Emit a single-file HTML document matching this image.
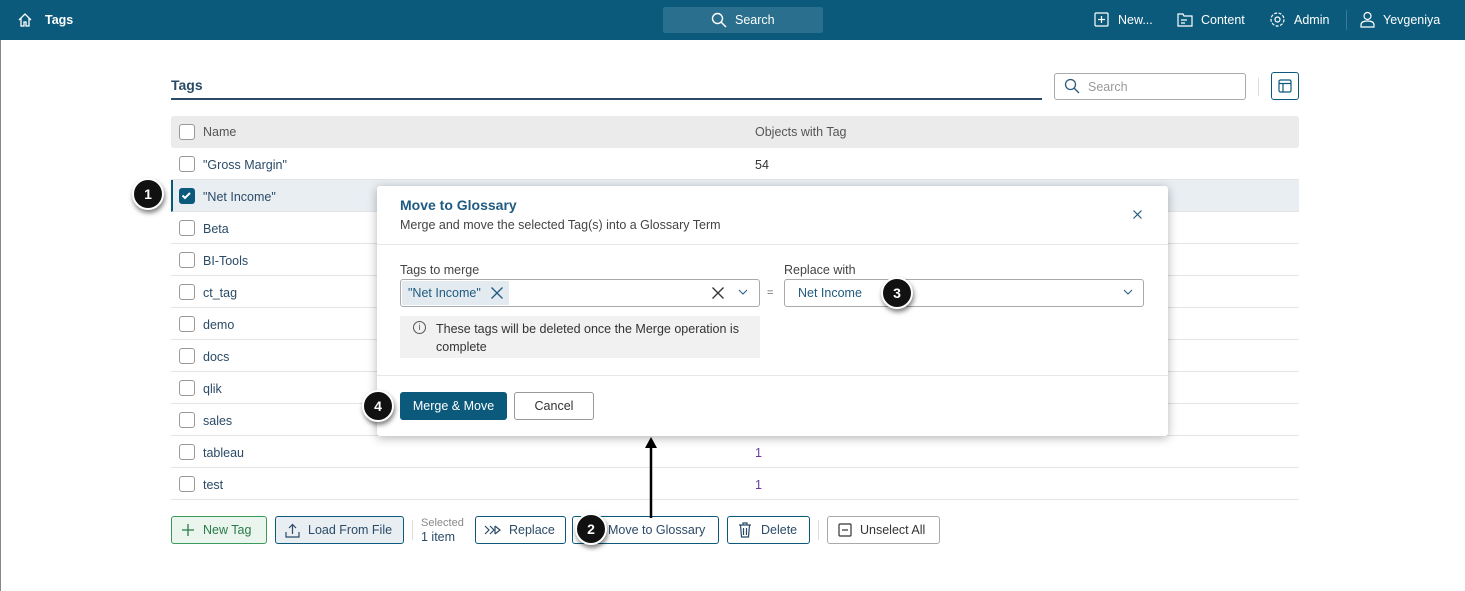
<!DOCTYPE html>
<html><head><style>
*{box-sizing:border-box;margin:0;padding:0}
body{width:1465px;height:591px;position:relative;font-family:"Liberation Sans",sans-serif;background:#fff;overflow:hidden;font-size:12.5px;color:#333}
.abs{position:absolute}
.top{left:0;top:0;width:1465px;height:40px;background:#0b5a7c;color:#fff;font-size:12.5px}
.top .t{position:absolute;top:13px}
.cb{position:absolute;width:16px;height:16px;border:1.5px solid #999;border-radius:3px;background:#fff}
.row{position:absolute;left:171px;width:1128px;height:32px;border-bottom:1px solid #e4e4e4}
.row .n{position:absolute;left:32px;top:10px;color:#2a4a66}
.row .c{position:absolute;left:584px;top:10px}
.row .cb{left:8px;top:8px}
.btn{position:absolute;top:516px;height:28px;border:1px solid #0b5a7c;border-radius:3px;font-size:12.5px;color:#2a4a66;padding-top:6px}
.badge{position:absolute;width:32px;height:32px;border-radius:50%;background:#111;border:2px solid #fff;box-shadow:1px 3px 5px rgba(0,0,0,.5);color:#fff;font-weight:bold;font-size:14px;text-align:center;line-height:28px}
</style></head><body>
<div class="abs top">
<svg class="abs" style="left:17px;top:12px" width="16" height="16" viewBox="0 0 16 16" fill="none" stroke="#fff" stroke-width="1.3"><path d="M2 8L8 2l6 6M4 6.5V14h3v-4h2v4h3V6.5"/></svg>
<span class="t" style="left:45px;font-weight:bold">Tags</span>
<div class="abs" style="left:663px;top:7px;width:160px;height:26px;background:#2a6f8e;border-radius:2px"></div>
<svg class="abs" style="left:711px;top:12px" width="16" height="16" viewBox="0 0 16 16" fill="none" stroke="#fff" stroke-width="1.4"><circle cx="6.5" cy="6.5" r="5"/><path d="M10 10l5 5"/></svg>
<span class="t" style="left:735px">Search</span>
<svg class="abs" style="left:1094px;top:12px" width="15" height="15" viewBox="0 0 15 15" fill="none" stroke="#fff" stroke-width="1.2"><rect x="1" y="1" width="13" height="13" rx="1"/><path d="M7.5 4v7M4 7.5h7"/></svg>
<span class="t" style="left:1118px">New...</span>
<svg class="abs" style="left:1177px;top:12px" width="16" height="15" viewBox="0 0 16 15" fill="none" stroke="#fff" stroke-width="1.2"><path d="M1 2h5l1 2h8v10H1z M4 8h6M4 11h4"/></svg>
<span class="t" style="left:1201px">Content</span>
<svg class="abs" style="left:1269px;top:11px" width="17" height="17" viewBox="0 0 17 17" fill="none" stroke="#fff" stroke-width="1.2"><circle cx="8.5" cy="8.5" r="2.5"/><circle cx="8.5" cy="8.5" r="6.5" stroke-dasharray="3 1.5"/></svg>
<span class="t" style="left:1294px">Admin</span>
<div class="abs" style="left:1346px;top:10px;width:1px;height:20px;background:#3a7a98"></div>
<svg class="abs" style="left:1360px;top:11px" width="15" height="17" viewBox="0 0 15 17" fill="none" stroke="#fff" stroke-width="1.2"><circle cx="7.5" cy="5" r="3.5"/><path d="M1 16v-2c0-3 3-4 6.5-4s6.5 1 6.5 4v2z"/></svg>
<span class="t" style="left:1383px">Yevgeniya</span>
</div>
<div class="abs" style="left:0;top:40px;width:1px;height:551px;background:#888"></div>

<div class="abs" style="left:171px;top:77px;font-size:14px;font-weight:bold;color:#2a4a66">Tags</div>
<div class="abs" style="left:171px;top:98px;width:871px;height:1.5px;background:#2a4a66"></div>
<div class="abs" style="left:1054px;top:73px;width:192px;height:27px;border:1px solid #aaa;border-radius:3px"></div>
<svg class="abs" style="left:1064px;top:78px" width="16" height="16" viewBox="0 0 16 16" fill="none" stroke="#2a5a7c" stroke-width="1.3"><circle cx="6.5" cy="6.5" r="5"/><path d="M10 10l5 5"/></svg>
<span class="abs" style="left:1088px;top:80px;color:#999">Search</span>
<div class="abs" style="left:1258px;top:78px;width:1px;height:18px;background:#ddd"></div>
<div class="abs" style="left:1271px;top:72px;width:28px;height:28px;border:1.5px solid #0b5a7c;border-radius:3px"></div>
<svg class="abs" style="left:1278px;top:79px" width="14" height="14" viewBox="0 0 14 14" fill="none" stroke="#0b5a7c" stroke-width="1.2"><rect x="1" y="1" width="12" height="12" rx="1.5"/><path d="M1 4.5h12M5 4.5V13"/></svg>

<div class="abs" style="left:171px;top:116px;width:1128px;height:32px;background:#ebebeb;border-radius:3px">
<div class="cb" style="left:8px;top:8px"></div><span class="abs" style="left:32px;top:9px;color:#555">Name</span><span class="abs" style="left:584px;top:9px;color:#555">Objects with Tag</span></div>
<div class="row" style="top:148px"><div class="cb"></div><span class="n">"Gross Margin"</span><span class="c">54</span></div>
<div class="row" style="top:180px;background:#e9eef3;border-left:2px solid #0b5a7c"><div class="cb" style="background:#0b5a7c;border-color:#0b5a7c;left:6px"><svg width="13" height="13" viewBox="0 0 13 13" fill="none" stroke="#fff" stroke-width="2"><path d="M2.5 6.5l2.5 2.5 5-5"/></svg></div><span class="n" style="left:30px">"Net Income"</span></div>
<div class="row" style="top:212px"><div class="cb"></div><span class="n">Beta</span></div>
<div class="row" style="top:244px"><div class="cb"></div><span class="n">BI-Tools</span></div>
<div class="row" style="top:276px"><div class="cb"></div><span class="n">ct_tag</span></div>
<div class="row" style="top:308px"><div class="cb"></div><span class="n">demo</span></div>
<div class="row" style="top:340px"><div class="cb"></div><span class="n">docs</span></div>
<div class="row" style="top:372px"><div class="cb"></div><span class="n">qlik</span></div>
<div class="row" style="top:404px"><div class="cb"></div><span class="n">sales</span></div>
<div class="row" style="top:436px"><div class="cb"></div><span class="n">tableau</span><span class="c" style="color:#6a3aa0">1</span></div>
<div class="row" style="top:468px"><div class="cb"></div><span class="n">test</span><span class="c" style="color:#6a3aa0">1</span></div>

<div class="btn" style="left:171px;width:96px;border-color:#3a9a5a;background:#eaf5ee;color:#2a7a4a;padding-left:31px">New Tag
<svg class="abs" style="left:10px;top:7px" width="12" height="12" viewBox="0 0 12 12" stroke="#2a7a4a" stroke-width="1.3"><path d="M6 0v12M0 6h12"/></svg></div>
<div class="btn" style="left:275px;width:129px;background:#e9eef3;padding-left:32px">Load From File
<svg class="abs" style="left:9px;top:6px" width="15" height="15" viewBox="0 0 15 15" fill="none" stroke="#2a4a66" stroke-width="1.2"><path d="M1 9v5h13V9M7.5 11V2M4 5l3.5-3.5L11 5"/></svg></div>
<div class="abs" style="left:412px;top:520px;width:1px;height:20px;background:#ddd"></div>
<div class="abs" style="left:421px;top:517px;font-size:11px;color:#888">Selected</div>
<div class="abs" style="left:421px;top:530px;color:#2a4a66">1 item</div>
<div class="btn" style="left:475px;width:91px;padding-left:33px">Replace
<svg class="abs" style="left:8px;top:8px" width="18" height="10" viewBox="0 0 18 10" fill="none" stroke="#2a4a66" stroke-width="1.2"><path d="M1 1l4 4-4 4M6 1l4 4-4 4M11 1v8M11 1l5 4-5 4"/></svg></div>
<div class="btn" style="left:572px;width:147px;padding-left:35px">Move to Glossary</div>
<div class="btn" style="left:727px;width:83px;padding-left:33px">Delete
<svg class="abs" style="left:10px;top:5px" width="14" height="16" viewBox="0 0 14 16" fill="none" stroke="#2a4a66" stroke-width="1.2"><path d="M1 3h12M5 3V1h4v2M2.5 3l1 12h7l1-12M5.5 6v7M8.5 6v7"/></svg></div>
<div class="abs" style="left:818px;top:520px;width:1px;height:20px;background:#ddd"></div>
<div class="btn" style="left:827px;width:113px;border-color:#aaa;padding-left:32px;color:#333">Unselect All
<svg class="abs" style="left:10px;top:6px" width="14" height="14" viewBox="0 0 14 14" fill="none" stroke="#333" stroke-width="1.2"><rect x="1" y="1" width="12" height="12" rx="1"/><path d="M4 7h6"/></svg></div>

<svg class="abs" style="left:640px;top:434px" width="22" height="84"><path d="M11 84V6" stroke="#000" stroke-width="2.5"/><path d="M5 14L11 3l6 11z" fill="#000"/></svg>

<div class="abs" style="left:377px;top:186px;width:791px;height:250px;background:#fff;box-shadow:0 2px 10px rgba(0,0,0,.3);border-radius:3px">
<div class="abs" style="left:23px;top:11px;font-size:14px;font-weight:bold;color:#1f5a80">Move to Glossary</div>
<div class="abs" style="left:23px;top:32px;color:#444">Merge and move the selected Tag(s) into a Glossary Term</div>
<svg class="abs" style="left:756px;top:24px" width="9" height="9" stroke="#1f5a80" stroke-width="1.2"><path d="M0.5 0.5l8 8M8.5 0.5l-8 8"/></svg>
<div class="abs" style="left:0;top:58px;width:791px;height:1px;background:#e6e6e6"></div>
<div class="abs" style="left:23px;top:77px;color:#444">Tags to merge</div>
<div class="abs" style="left:23px;top:93px;width:360px;height:28px;border:1px solid #aaa;border-radius:3px"></div>
<div class="abs" style="left:25px;top:95px;width:107px;height:24px;background:#e3ebf0"></div>
<div class="abs" style="left:31px;top:100px;color:#1f5a80">"Net Income"</div>
<svg class="abs" style="left:114px;top:101px" width="12" height="12" stroke="#1f5a80" stroke-width="1.3"><path d="M0.5 0.5l11 11M11.5 0.5l-11 11"/></svg>
<svg class="abs" style="left:335px;top:101px" width="12" height="12" stroke="#333" stroke-width="1.3"><path d="M0.5 0.5l11 11M11.5 0.5l-11 11"/></svg>
<svg class="abs" style="left:361px;top:103px" width="10" height="7"><path d="M1 1l4 4 4-4" stroke="#1f5a80" fill="none"/></svg>
<div class="abs" style="left:390px;top:101px;color:#666;font-size:11px">=</div>
<div class="abs" style="left:407px;top:77px;color:#444">Replace with</div>
<div class="abs" style="left:407px;top:93px;width:360px;height:28px;border:1px solid #aaa;border-radius:3px"></div>
<div class="abs" style="left:421px;top:100px;color:#1f5a80">Net Income</div>
<svg class="abs" style="left:746px;top:103px" width="10" height="7"><path d="M1 1l4 4 4-4" stroke="#1f5a80" fill="none"/></svg>
<div class="abs" style="left:23px;top:130px;width:360px;height:42px;background:#f1f1f1"></div>
<div class="abs" style="left:36px;top:135px;width:13px;height:13px;border:1px solid #555;border-radius:50%;font-size:9px;text-align:center;line-height:11px;color:#555">i</div>
<div class="abs" style="left:59px;top:134px;color:#333;line-height:18px;width:320px">These tags will be deleted once the Merge operation is complete</div>
<div class="abs" style="left:0;top:189px;width:791px;height:1px;background:#e6e6e6"></div>
<div class="abs" style="left:23px;top:206px;width:107px;height:28px;background:#0b5a7c;border-radius:3px;color:#fff;text-align:center;line-height:28px">Merge &amp; Move</div>
<div class="abs" style="left:137px;top:206px;width:80px;height:28px;border:1px solid #999;border-radius:3px;color:#333;text-align:center;line-height:26px">Cancel</div>
</div>

<div class="badge" style="left:132px;top:178px">1</div>
<div class="badge" style="left:575px;top:513px">2</div>
<div class="badge" style="left:881px;top:277px">3</div>
<div class="badge" style="left:362px;top:390px">4</div>
</body></html>
